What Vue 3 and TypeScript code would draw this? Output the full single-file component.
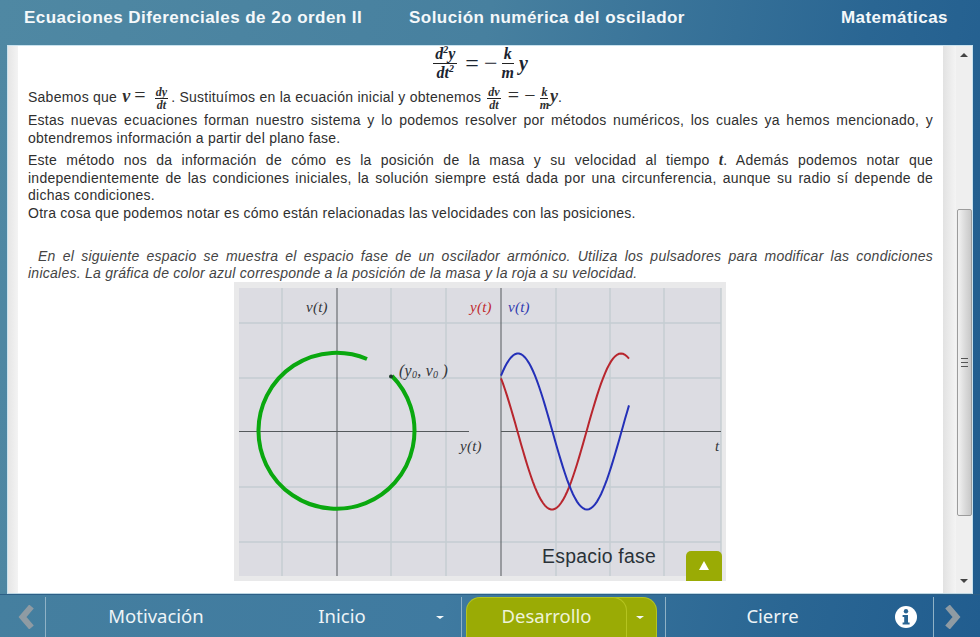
<script setup lang="ts">
import { computed } from "vue";

const K = (2 * Math.PI) / 138;

const wave = (peakX: number, sign: number) => {
  const pts: string[] = [];
  for (let x = 501; x <= 630; x += 2) {
    const y = 431.5 - 282 + sign * 78 * Math.cos((x - peakX) * K);
    pts.push(`${x - 234},${y.toFixed(1)}`);
  }
  return pts.join(" ");
};

const bluePoints = computed(() => wave(518, -1));
const redPoints = computed(() => wave(552, 1));

const vLines = [48, 157, 212, 322, 376, 430, 487];
const hLines = [41, 96, 205, 260];
</script>

<template>
  <div class="page">
    <header class="top">
      <span class="top-course">Ecuaciones Diferenciales de 2o orden II</span>
      <span class="top-title">Solución numérica del oscilador</span>
      <span class="top-subject">Matemáticas</span>
    </header>

    <main class="panel">
      <div class="gutter-left"></div>
      <div class="content">
        <div class="math-block math">
          <span class="frac big"><span>d<sup>2</sup>y</span><span>dt<sup>2</sup></span></span>
          <span class="eq">=</span>
          <span class="eq minus">−</span>
          <span class="frac big narrow"><span>k</span><span>m</span></span>
          <span class="big-y">y</span>
        </div>
        <p class="line-math">
          Sabemos que <span class="math v-in">v</span><span class="eq-in">=</span><span class="frac math"><span>dy</span><span>dt</span></span><span class="after-frac">.</span> Sustituímos en la ecuación inicial y obtenemos
          <span class="frac math frac-second"><span>dv</span><span>dt</span></span><span class="eq-in eq-second">=</span><span class="eq-in tight">−</span><span class="frac math"><span>k</span><span>m</span></span><span class="math y-in">y</span>.
        </p>
        <p class="para">Estas nuevas ecuaciones forman nuestro sistema y lo podemos resolver por métodos numéricos, los cuales ya hemos mencionado, y obtendremos información a partir del plano fase.</p>
        <p class="para second">Este método nos da información de cómo es la posición de la masa y su velocidad al tiempo <b class="math t-in">t</b>. Además podemos notar que independientemente de las condiciones iniciales, la solución siempre está dada por una circunferencia, aunque su radio sí depende de dichas condiciones.</p>
        <p class="para">Otra cosa que podemos notar es cómo están relacionadas las velocidades con las posiciones.</p>
        <p class="para note">
          <span class="note-first">En el siguiente espacio se muestra el espacio fase de un oscilador armónico. Utiliza los pulsadores para modificar las condiciones</span>
          inicales. La gráfica de color azul corresponde a la posición de la masa y la roja a su velocidad.
        </p>

        <div class="figure">
          <svg width="492" height="299" viewBox="0 0 492 299">
            <rect width="492" height="299" fill="#e9e9ea" />
            <rect x="5" y="6" width="482" height="288" fill="#dcdce2" />
            <line v-for="x in vLines" :key="x" :x1="x" :x2="x" y1="6" y2="294" stroke="#c6ced2" stroke-width="1.5" />
            <line v-for="y in hLines" :key="y" x1="5" x2="487" :y1="y" :y2="y" stroke="#c4ccd2" stroke-width="1.5" />
            <line x1="103" x2="103" y1="6" y2="294" stroke="#55595c" />
            <line x1="267" x2="267" y1="6" y2="294" stroke="#55595c" />
            <line x1="5" x2="235" y1="149.5" y2="149.5" stroke="#55595c" />
            <line x1="267" x2="487" y1="149.5" y2="149.5" stroke="#55595c" />
            <path d="M158 94 A78 78 0 1 1 133 77" fill="none" stroke="#0aa80f" stroke-width="4" />
            <circle cx="157" cy="94.5" r="2" fill="#1d3a2a" />
            <polyline :points="redPoints" fill="none" stroke="#b8262e" stroke-width="2" />
            <polyline :points="bluePoints" fill="none" stroke="#2430b8" stroke-width="2" />
            <g class="plot-label">
              <text x="72" y="30" fill="#33363a">v(t)</text>
              <text x="236" y="30" fill="#c02a30">y(t)</text>
              <text x="274" y="30" fill="#2f3ab0">v(t)</text>
              <text x="226" y="169" fill="#33363a">y(t)</text>
              <text x="481" y="169" fill="#33363a">t</text>
              <text x="165" y="94" fill="#33363a" class="point-label">(y<tspan class="sub" dy="2">0</tspan><tspan dy="-2">, v</tspan><tspan class="sub" dy="2">0</tspan><tspan dy="-2"> )</tspan></text>
            </g>
            <text x="308" y="281" class="fig-title">Espacio fase</text>
          </svg>
          <button class="fig-toggle"><span class="tri-up"></span></button>
        </div>
      </div>
      <div class="gutter-right"></div>
      <div class="scroll">
        <span class="arrow arrow-up"></span>
        <div class="thumb"><span class="grip"></span></div>
        <span class="arrow arrow-down"></span>
      </div>
    </main>

    <nav class="bottom">
      <div class="side side-left">
        <svg width="16" height="24" viewBox="0 0 16 24"><path d="M13.5 1.5 L4.5 12 L13.5 22.5" fill="none" stroke="#8f9ba3" stroke-width="6" /></svg>
      </div>
      <div class="sep"></div>
      <div class="tab tab-motiv">Motivación</div>
      <div class="tab tab-inicio">Inicio</div>
      <div class="caret-slot"><span class="caret"></span></div>
      <div class="sep"></div>
      <div class="active">
        <div class="active-main">Desarrollo</div>
        <div class="active-more"><span class="caret"></span></div>
      </div>
      <div class="sep sep-b"></div>
      <div class="tab tab-cierre">Cierre</div>
      <div class="info">
        <svg width="24" height="24" viewBox="0 0 24 24">
          <circle cx="12" cy="12" r="11" fill="#fff" />
          <circle cx="12" cy="6.3" r="2.2" fill="#2a6592" />
          <path d="M8.6 10 H14 V17.6 H15.6 V19.6 H8.6 V17.6 H10.2 V12 H8.6 Z" fill="#2a6592" />
        </svg>
      </div>
      <div class="sep"></div>
      <div class="side side-right">
        <svg width="16" height="24" viewBox="0 0 16 24"><path d="M2.5 1.5 L11.5 12 L2.5 22.5" fill="none" stroke="#8f9ba3" stroke-width="6" /></svg>
      </div>
    </nav>
  </div>
</template>

<style>
html, body {
  margin: 0;
  overflow: hidden;
}
</style>

<style scoped>
.page {
  width: 980px;
  height: 637px;
  display: flex;
  flex-direction: column;
  background: linear-gradient(100deg, #4f88a3 0%, #47809f 45%, #2a6693 80%, #205c8e 100%);
  font-family: "Liberation Sans", Arial, sans-serif;
  overflow: hidden;
}

.top {
  height: 45px;
  flex: none;
  display: flex;
  align-items: center;
  padding: 0 32px 9px 24px;
  box-sizing: border-box;
  color: #f4f8fa;
  font-weight: 700;
  font-size: 17px;
  letter-spacing: 0.46px;
}

.top-course {
  width: 385px;
}

.top-title {
  flex: 1;
}

.panel {
  flex: none;
  height: 549px;
  margin: 0 7px;
  display: flex;
  background: #fff;
  border: 1px solid #c9e2ee;
  border-bottom-color: #bcd6e2;
  box-sizing: border-box;
}

.gutter-left {
  width: 10px;
  flex: none;
  background: linear-gradient(90deg, #e6e6e6, #f3f3f3);
}

.content {
  width: 925px;
  flex: none;
  box-sizing: border-box;
  padding: 0 10px;
  font-size: 14px;
  letter-spacing: 0.25px;
  line-height: 17.6px;
  color: #2f2f2f;
}

.math {
  font-family: "Liberation Serif", serif;
  font-weight: 700;
  font-style: italic;
  letter-spacing: 0;
}

.math-block {
  display: flex;
  justify-content: center;
  align-items: center;
  height: 39px;
  margin-top: -2px;
  margin-bottom: 1px;
  color: #1a2430;
}

.frac {
  display: inline-flex;
  flex-direction: column;
  align-items: center;
  vertical-align: middle;
  line-height: 1;
  font-size: 12px;
}

.frac > span:first-child {
  border-bottom: 1px solid #222;
  padding: 0 1px;
}

.frac.big {
  font-size: 16px;
}

.frac.big > span:first-child {
  padding: 0 2px 1px;
}

.frac.big > span:last-child {
  padding-top: 1px;
}

.frac sup {
  font-size: 10px;
  line-height: 0;
}

.frac-second {
  margin-left: 2px;
}

.eq {
  font-weight: 400;
  font-style: normal;
  font-size: 24px;
  margin-left: 8px;
}

.minus {
  margin-left: 5px;
  margin-right: 4px;
}

.big-y {
  font-size: 20px;
  margin-left: 5px;
}

.line-math {
  margin: 0;
  height: 28px;
  line-height: 22px;
}

.y-in,
.v-in {
  font-size: 18px;
  margin-left: 1px;
}

.eq-in {
  font-family: "Liberation Serif", serif;
  font-size: 20px;
  margin: 0 9px 0 4px;
}

.eq-second {
  margin-left: 7px;
}

.tight {
  margin: 0 4px 0 -4px;
}

.after-frac {
  margin-left: 3px;
}

.t-in {
  display: inline-block;
  font-size: 16px;
  line-height: 1;
}

.para {
  margin: 0;
  text-align: justify;
}

.second {
  margin-top: 5px;
}

.note {
  margin-top: 25px;
  font-style: italic;
  color: #444;
}

.note-first {
  display: block;
  padding-left: 10px;
  text-align-last: justify;
}

.figure {
  position: relative;
  width: 492px;
  height: 299px;
  margin: -1px 0 0 206px;
}

.figure svg {
  display: block;
}

.plot-label text {
  font-family: "Liberation Serif", serif;
  font-style: italic;
  font-size: 15px;
}

.plot-label .point-label {
  font-size: 16px;
}

.plot-label .sub {
  font-size: 10px;
}

.fig-title {
  font-family: "Liberation Sans", sans-serif;
  font-size: 19.4px;
  fill: #2a3238;
}

.fig-toggle {
  position: absolute;
  right: 4px;
  bottom: 0;
  width: 36px;
  height: 30px;
  padding: 0;
  border: 0;
  border-radius: 5px 5px 0 0;
  background: #9aab05;
  display: flex;
  align-items: center;
  justify-content: center;
}

.tri-up {
  width: 0;
  height: 0;
  border-left: 5px solid transparent;
  border-right: 5px solid transparent;
  border-bottom: 9px solid #fff;
}

.gutter-right {
  width: 13px;
  flex: none;
  background: linear-gradient(90deg, #e2e2e2, #f4f4f4);
}

.scroll {
  flex: 1;
  background: #efefef;
  display: flex;
  flex-direction: column;
  align-items: center;
}

.arrow {
  width: 0;
  height: 0;
  border-left: 4px solid transparent;
  border-right: 4px solid transparent;
}

.arrow-up {
  margin-top: 7px;
  border-bottom: 4px solid #444;
}

.arrow-down {
  margin-top: 63px;
  border-top: 4px solid #444;
}

.thumb {
  margin-top: 152px;
  width: 15px;
  height: 307px;
  flex: none;
  box-sizing: border-box;
  border: 1px solid #9c9c9c;
  border-radius: 2px;
  background: linear-gradient(90deg, #f2f2f2, #dcdcdc 50%, #c8c8c8);
  display: flex;
  align-items: center;
  justify-content: center;
}

.grip {
  width: 7px;
  height: 7px;
  border-top: 1px solid #555;
  border-bottom: 1px solid #555;
  background: linear-gradient(#555, #555) center / 100% 1px no-repeat;
}

.bottom {
  flex: 1;
  display: flex;
  align-items: stretch;
  color: #eef4f7;
  font-family: "Noto Sans", sans-serif;
  font-size: 18.5px;
  padding-top: 3px;
  box-sizing: border-box;
  background: linear-gradient(100deg, #457f9f 0%, #3f7aa0 45%, #2a6693 80%, #215d8f 100%);
  box-shadow: inset 0 1px 0 #2d5f86;
}

.side {
  flex: none;
  display: flex;
  align-items: center;
  justify-content: center;
  box-sizing: border-box;
}

.side-left {
  width: 45px;
  padding-left: 7px;
}

.side-right {
  flex: 1;
  padding-right: 8px;
}

.sep {
  width: 1px;
  flex: none;
  background: #8fb2c6;
}

.tab {
  display: flex;
  align-items: center;
  justify-content: center;
  padding-bottom: 4px;
  box-sizing: border-box;
}

.tab-motiv {
  width: 220px;
}

.tab-inicio {
  width: 152px;
}

.caret-slot {
  width: 43px;
  display: flex;
  align-items: center;
  justify-content: center;
}

.caret {
  width: 0;
  height: 0;
  border-left: 4px solid transparent;
  border-right: 4px solid transparent;
  border-top: 3px solid #f4f8fa;
}

.active {
  width: 191px;
  flex: none;
  margin-left: 4px;
  display: flex;
  color: #eef3da;
}

.active-main {
  width: 161px;
  flex: none;
  position: relative;
  border: 1px solid #b5c420;
  border-bottom: 0;
  border-radius: 14px 14px 0 0;
  background: #9aab05;
  display: flex;
  align-items: center;
  justify-content: center;
  box-sizing: border-box;
  padding-bottom: 4px;
}

.active-more {
  flex: 1;
  margin-left: -14px;
  padding-left: 10px;
  border: 1px solid #b5c420;
  border-bottom: 0;
  border-radius: 0 14px 0 0;
  background: #9aab05;
  display: flex;
  align-items: center;
  justify-content: center;
}

.sep-b {
  margin-left: 8px;
}

.tab-cierre {
  width: 213px;
}

.info {
  width: 54px;
  flex: none;
  display: flex;
  align-items: center;
  justify-content: center;
}
</style>
